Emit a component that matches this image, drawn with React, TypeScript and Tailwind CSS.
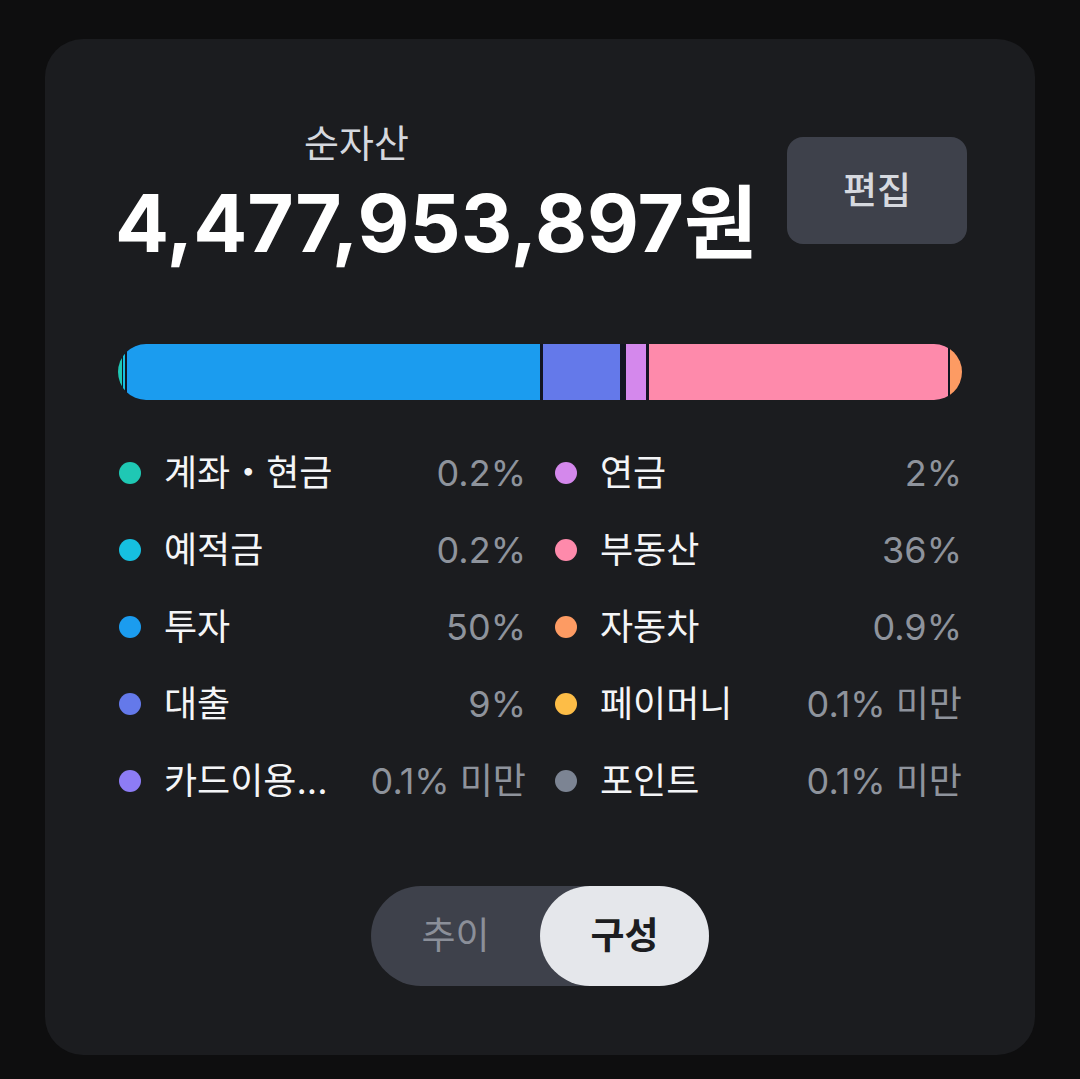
import React from "react"

const KR = "font-['Inter','Noto_Sans_CJK_KR',sans-serif]"

const legend = [
  [
    { label: "계좌・현금", value: "0.2%", dot: "bg-[#1fc8b4]" },
    { label: "예적금", value: "0.2%", dot: "bg-[#16c0e0]" },
    { label: "투자", value: "50%", dot: "bg-[#1b9cef]" },
    { label: "대출", value: "9%", dot: "bg-[#6479ea]" },
    { label: "카드이용...", value: "0.1% 미만", dot: "bg-[#8d7cf5]" },
  ],
  [
    { label: "연금", value: "2%", dot: "bg-[#d488ec]" },
    { label: "부동산", value: "36%", dot: "bg-[#fe8aab]" },
    { label: "자동차", value: "0.9%", dot: "bg-[#fd9b63]" },
    { label: "페이머니", value: "0.1% 미만", dot: "bg-[#fdbd47]" },
    { label: "포인트", value: "0.1% 미만", dot: "bg-[#7c8493]" },
  ],
]

export default function App() {
  return (
    <div className={`min-h-[1079px] bg-[#0e0e0f] px-[45px] pt-[39px] ${KR}`}>
      <div className="h-[1016px] rounded-[38px] bg-[#1b1c1f] px-[73px] pt-[80px]">
        {/* Header */}
        <div className="flex items-start justify-between">
          <div>
            <p className="pl-[186px] pt-[2px] text-[38px] leading-[44px] text-[#d5d8de]">순자산</p>
            <p className="-ml-[3px] mt-[10px] text-[80px] font-bold leading-[96px] text-white">
              4,477,953,897원
            </p>
          </div>
          <button className="-mr-[5px] mt-[18px] h-[107px] w-[180px] rounded-[16px] bg-[#3e414b] text-[37px] font-medium text-[#d6d9df]">
            편집
          </button>
        </div>

        {/* Bar */}
        <div className="mt-[73px] flex h-[56px] overflow-hidden rounded-full bg-[#121522]">
          <div className="w-[4px] bg-[#1fc8b4]" />
          <div className="ml-[1px] w-[2px] bg-[#16c0e0]" />
          <div className="ml-[2px] w-[413px] bg-[#1b9cef]" />
          <div className="ml-[3px] w-[77px] bg-[#6479ea]" />
          <div className="ml-[6px] w-[20px] bg-[#d488ec]" />
          <div className="ml-[3px] w-[299px] bg-[#fe8aab]" />
          <div className="ml-[2px] flex-1 bg-[#fd9b63]" />
        </div>

        {/* Legend */}
        <div className="mt-[34px] grid grid-cols-2 gap-x-[28px]">
          {legend.map((col, i) => (
            <div key={i}>
              {col.map((item) => (
                <div key={item.label} className="flex h-[77px] items-center">
                  <span className={`ml-[1px] h-[22px] w-[22px] shrink-0 rounded-full ${item.dot}`} />
                  <span className="ml-[23px] flex-1 text-[36px] text-[#f4f5f7]">{item.label}</span>
                  <span className="text-[36px] text-[#8e939c]">{item.value}</span>
                </div>
              ))}
            </div>
          ))}
        </div>

        {/* Toggle */}
        <div className="mt-[67px] flex justify-center">
          <div className="flex h-[100px] w-[338px] rounded-full bg-[#3e414b]">
            <button className="flex-1 text-[37px] text-[#8b8f99]">추이</button>
            <button className="flex-1 rounded-full bg-[#e5e7eb] text-[37px] font-bold text-[#1c1d21]">구성</button>
          </div>
        </div>
      </div>
    </div>
  )
}
